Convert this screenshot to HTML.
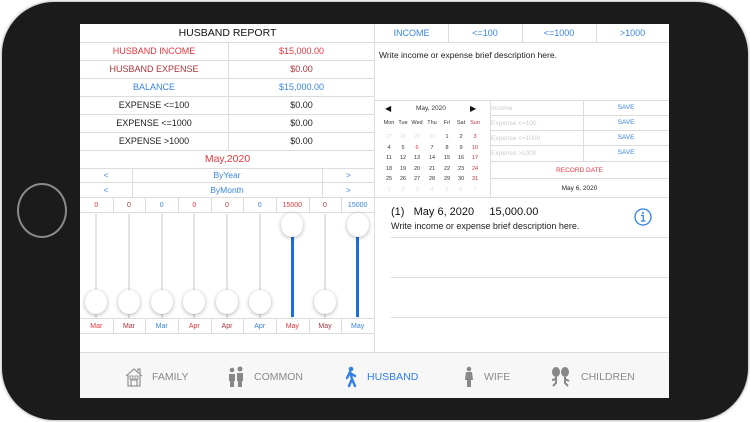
<!DOCTYPE html>
<html><head><meta charset="utf-8"><style>
*{margin:0;padding:0;box-sizing:border-box}
body{width:750px;height:422px;background:#fff;position:relative;overflow:hidden;font-family:"Liberation Sans",sans-serif}
.a{position:absolute}
.phone{left:2px;top:2px;width:746px;height:418px;background:#1b1b1b;border-radius:52px;box-shadow:0 0 3px #888}
.home{left:17px;top:183px;width:50px;height:55px;border:2px solid #8a8a8a;border-radius:50%}
.screen{left:80px;top:24px;width:589px;height:374px;background:#fff;overflow:hidden}
.c{position:absolute;display:flex;align-items:center;justify-content:center;font-size:9px;color:#222}
.hl{position:absolute;height:1px;background:#dcdcdc}
.vl{position:absolute;width:1px;background:#dcdcdc}
.red{color:#e8363d}.dred{color:#a8353a}.blue{color:#3a85e0}
.cal{position:absolute;font-size:5.5px;color:#333;width:14px;text-align:center}
.tab{position:absolute;top:366px;font-size:10.5px;color:#8a8a8a;display:flex;align-items:center;gap:8px}
</style></head><body>
<div class="a phone"></div>
<div class="a home"></div>
<div class="a screen">
<div class="c" style="left:0;top:0;width:295px;height:18px;font-size:10.5px;color:#111">HUSBAND REPORT</div>
<div class="hl" style="left:0;top:18px;width:295px"></div>
<div class="c red" style="left:0;top:18px;width:148px;height:18px">HUSBAND INCOME</div>
<div class="c red" style="left:148px;top:18px;width:147px;height:18px">$15,000.00</div>
<div class="hl" style="left:0;top:36px;width:295px"></div>
<div class="c dred" style="left:0;top:36px;width:148px;height:18px">HUSBAND EXPENSE</div>
<div class="c dred" style="left:148px;top:36px;width:147px;height:18px">$0.00</div>
<div class="hl" style="left:0;top:54px;width:295px"></div>
<div class="c blue" style="left:0;top:54px;width:148px;height:18px">BALANCE</div>
<div class="c blue" style="left:148px;top:54px;width:147px;height:18px">$15,000.00</div>
<div class="hl" style="left:0;top:72px;width:295px"></div>
<div class="c" style="left:0;top:72px;width:148px;height:18px">EXPENSE &lt;=100</div>
<div class="c" style="left:148px;top:72px;width:147px;height:18px">$0.00</div>
<div class="hl" style="left:0;top:90px;width:295px"></div>
<div class="c" style="left:0;top:90px;width:148px;height:18px">EXPENSE &lt;=1000</div>
<div class="c" style="left:148px;top:90px;width:147px;height:18px">$0.00</div>
<div class="hl" style="left:0;top:108px;width:295px"></div>
<div class="c" style="left:0;top:108px;width:148px;height:18px">EXPENSE &gt;1000</div>
<div class="c" style="left:148px;top:108px;width:147px;height:18px">$0.00</div>
<div class="hl" style="left:0;top:126px;width:295px"></div>
<div class="vl" style="left:148px;top:18px;height:108px"></div>
<div class="c red" style="left:0;top:126px;width:295px;height:18px;font-size:10.5px">May,2020</div>
<div class="hl" style="left:0;top:144px;width:295px"></div>
<div class="c blue" style="left:0;top:144px;width:52px;height:14px;font-size:8px">&lt;</div>
<div class="c blue" style="left:52px;top:144px;width:190px;height:14px;font-size:8.5px">ByYear</div>
<div class="c blue" style="left:242px;top:144px;width:53px;height:14px;font-size:8px">&gt;</div>
<div class="hl" style="left:0;top:158px;width:295px"></div>
<div class="c blue" style="left:0;top:159px;width:52px;height:14px;font-size:8px">&lt;</div>
<div class="c blue" style="left:52px;top:159px;width:190px;height:14px;font-size:8.5px">ByMonth</div>
<div class="c blue" style="left:242px;top:159px;width:53px;height:14px;font-size:8px">&gt;</div>
<div class="vl" style="left:52px;top:144px;height:29px"></div>
<div class="vl" style="left:242px;top:144px;height:29px"></div>
<div class="hl" style="left:0;top:173px;width:295px"></div>
<div class="hl" style="left:0;top:188px;width:295px"></div>
<div class="hl" style="left:0;top:294px;width:295px"></div>
<div class="hl" style="left:0;top:309px;width:295px"></div>
<div id="sl"></div>
<div class="vl" style="left:294px;top:0;height:328px"></div>
<div class="c blue" style="left:295px;top:0;width:73px;height:18px">INCOME</div>
<div class="c blue" style="left:368px;top:0;width:74px;height:18px">&lt;=100</div>
<div class="c blue" style="left:442px;top:0;width:74px;height:18px">&lt;=1000</div>
<div class="c blue" style="left:516px;top:0;width:73px;height:18px">&gt;1000</div>
<div class="vl" style="left:368px;top:0;height:18px"></div>
<div class="vl" style="left:442px;top:0;height:18px"></div>
<div class="vl" style="left:516px;top:0;height:18px"></div>
<div class="hl" style="left:295px;top:18px;width:294px"></div>
<div class="a" style="left:299px;top:26px;font-size:8.5px;color:#222">Write income or expense brief description here.</div>
<div class="hl" style="left:295px;top:76px;width:294px"></div>
<div class="vl" style="left:410px;top:76px;height:97px"></div>
<div class="a" style="left:305px;top:80px;font-size:8px;color:#111">&#9664;</div>
<div class="a" style="left:336px;top:81px;font-size:6.5px;color:#333">May, 2020</div>
<div class="a" style="left:390px;top:80px;font-size:8px;color:#111">&#9654;</div>
<div id="cal"></div>
<div class="a" style="left:411px;top:81px;font-size:6.5px;color:#ccc">Income</div>
<div class="a" style="left:411px;top:96px;font-size:6.5px;color:#ccc">Expense &lt;=100</div>
<div class="a" style="left:411px;top:111px;font-size:6.5px;color:#ccc">Expense &lt;=1000</div>
<div class="a" style="left:411px;top:126px;font-size:6.5px;color:#ccc">Expense &gt;1000</div>
<div class="c blue" style="left:503px;top:76px;width:86px;height:15px;font-size:6.5px">SAVE</div>
<div class="c blue" style="left:503px;top:91px;width:86px;height:15px;font-size:6.5px">SAVE</div>
<div class="c blue" style="left:503px;top:106px;width:86px;height:15px;font-size:6.5px">SAVE</div>
<div class="c blue" style="left:503px;top:121px;width:86px;height:15px;font-size:6.5px">SAVE</div>
<div class="vl" style="left:503px;top:76px;height:61px"></div>
<div class="hl" style="left:410px;top:91px;width:179px"></div>
<div class="hl" style="left:410px;top:106px;width:179px"></div>
<div class="hl" style="left:410px;top:121px;width:179px"></div>
<div class="hl" style="left:410px;top:137px;width:179px"></div>
<div class="c red" style="left:410px;top:138px;width:179px;height:16px;font-size:6.5px">RECORD DATE</div>
<div class="hl" style="left:410px;top:154px;width:179px"></div>
<div class="c" style="left:410px;top:155px;width:179px;height:18px;font-size:6.5px">May 6, 2020</div>
<div class="hl" style="left:295px;top:173px;width:294px"></div>
<div class="a" style="left:311px;top:182px;font-size:11px;color:#111;white-space:pre">(1)   May 6, 2020     15,000.00</div>
<div class="a" style="left:311px;top:197px;font-size:9px;color:#222">Write income or expense brief description here.</div>
<svg class="a" style="left:554px;top:184px" width="18" height="18" viewBox="0 0 18 18"><circle cx="9" cy="9" r="8" fill="none" stroke="#2f7fe6" stroke-width="1.3"/><circle cx="9" cy="5" r="1" fill="#2f7fe6"/><path d="M7 7.5H9.3V13M7 13H11.3" fill="none" stroke="#2f7fe6" stroke-width="1.2"/></svg>
<div class="hl" style="left:311px;top:213px;width:278px"></div>
<div class="hl" style="left:311px;top:253px;width:278px"></div>
<div class="hl" style="left:311px;top:293px;width:278px"></div>
<div class="a" style="left:0;top:328px;width:589px;height:46px;background:#f7f7f7;border-top:1px solid #ddd"></div>
</div>
<div class="tab" style="left:124px"><svg width="20" height="22" viewBox="0 0 20 22"><path d="M2 10L10 3L18 10M4 9V20H16V9M7 20V14H13V20M14 5V3H16V7" fill="none" stroke="#999" stroke-width="1.3"/><rect x="6" y="10" width="3" height="3" fill="none" stroke="#999"/><rect x="11" y="10" width="3" height="3" fill="none" stroke="#999"/></svg>FAMILY</div>
<div class="tab" style="left:226px"><svg width="20" height="22" viewBox="0 0 20 22"><circle cx="6" cy="4" r="2.3" fill="#888"/><circle cx="14" cy="3" r="2.5" fill="#888"/><path d="M3 8h6v7h-1v6H4v-6H3zM11 7h6v8h-1v6h-4v-6h-1z" fill="#888"/></svg>COMMON</div>
<div class="tab" style="left:343px;color:#2f7fe6"><svg width="16" height="22" viewBox="0 0 16 22"><circle cx="8" cy="3" r="2.3" fill="#2f7fe6"/><path d="M7 6L4 12M7 6L9 13L6 20M9 13L12 20M7 7L12 10" fill="none" stroke="#2f7fe6" stroke-width="2.4" stroke-linecap="round"/></svg>HUSBAND</div>
<div class="tab" style="left:462px"><svg width="14" height="22" viewBox="0 0 14 22"><circle cx="7" cy="3" r="2.3" fill="#888"/><path d="M4 6h6l1 8H9v7H5v-7H3z" fill="#888"/></svg>WIFE</div>
<div class="tab" style="left:549px"><svg width="24" height="22" viewBox="0 0 24 22"><ellipse cx="7" cy="6" rx="4" ry="5" fill="#888"/><ellipse cx="16" cy="6" rx="4" ry="5" fill="#888"/><path d="M7 11V17L4 20M16 11V17L19 20M7 13L3 14M16 13L20 15" stroke="#888" stroke-width="2" fill="none"/></svg>CHILDREN</div>
<script>
(function(){
var sl='',vals=['0','0','0','0','0','0','15000','0','15000'],cols=['red','dred','blue','red','dred','blue','red','dred','blue'],mon=['Mar','Mar','Mar','Apr','Apr','Apr','May','May','May'];
var w=294/9;
for(var i=0;i<9;i++){var x=i*w;
sl+='<div class="c '+cols[i]+'" style="left:'+x+'px;top:174px;width:'+w+'px;height:14px;font-size:7px">'+vals[i]+'</div>';
sl+='<div class="c '+cols[i]+'" style="left:'+x+'px;top:295px;width:'+w+'px;height:14px;font-size:7px">'+mon[i]+'</div>';
if(i>0)sl+='<div class="vl" style="left:'+x+'px;top:174px;height:14px"></div><div class="vl" style="left:'+x+'px;top:295px;height:14px"></div>';
var cx=x+w/2,isTop=(vals[i]!=='0');
sl+='<div class="a" style="left:'+(cx-1)+'px;top:190px;width:2px;height:104px;background:#e2e2e2"></div>';
if(isTop)sl+='<div class="a" style="left:'+(cx-1.5)+'px;top:200px;width:3px;height:93px;background:#1a6fdc"></div>';
sl+='<div class="a" style="left:'+(cx-11)+'px;top:'+(isTop?189:266)+'px;width:22px;height:24px;border-radius:50%;background:#fff;box-shadow:0 1px 4px rgba(0,0,0,.3)"></div>';}
document.getElementById('sl').outerHTML=sl;
var xs=[302,316,330,345,360,374,388],c='',days=['Mon','Tue','Wed','Thu','Fri','Sat','Sun'];
for(var j=0;j<7;j++)c+='<div class="cal" style="left:'+xs[j]+'px;top:96px;color:'+(j==6?'#c0303a':'#333')+'">'+days[j]+'</div>';
var cells=['27','28','29','30','1','2','3'];for(var d=4;d<=31;d++)cells.push(''+d);cells=cells.concat(['1','2','3','4','5','6','7']);
for(var k=0;k<cells.length;k++){var r=Math.floor(k/7),cc=k%7,fade=(k<4||k>=35),col=fade?'#ddd':(cc==6?'#c0303a':(cells[k]=='6'&&r==1?'#e03a3a':'#333'));
c+='<div class="cal" style="left:'+xs[cc]+'px;top:'+(110+r*10.5)+'px;color:'+col+'">'+cells[k]+'</div>';}
document.getElementById('cal').outerHTML=c;
})();
</script>
</body></html>
